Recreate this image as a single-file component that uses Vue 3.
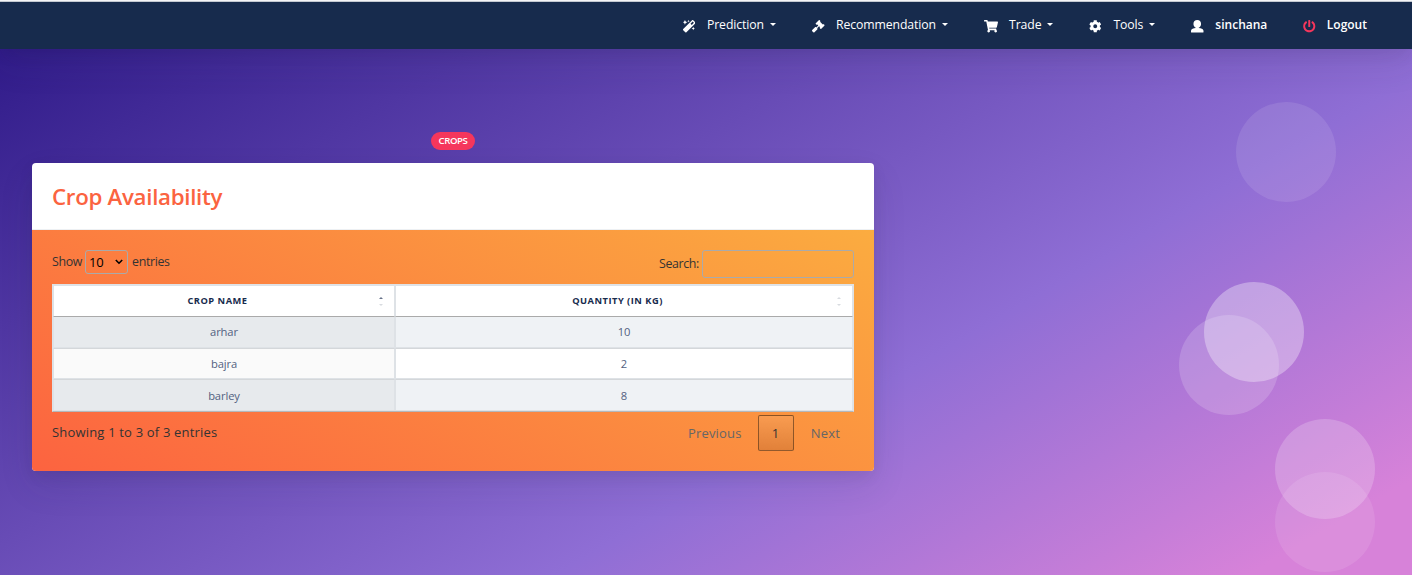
<script setup>
const menus = [
  { label: 'Prediction', icon: 'magic', caret: true },
  { label: 'Recommendation', icon: 'gavel', caret: true },
  { label: 'Trade', icon: 'cart', caret: true },
  { label: 'Tools', icon: 'cog', caret: true },
  { label: 'sinchana', icon: 'user', strong: true },
  { label: 'Logout', icon: 'power', strong: true },
]

const icons = {
  magic: { w: 512, d: 'M224 96l16-32 32-16-32-16-16-32-16 32-32 16 32 16 16 32zM80 190l30-70L180 90l-70-30L80 0 50 60 0 90l50 30zM420 280l-22 44L350 350l48 22L420 420l22-48L490 350l-48-26zM502.620 94.230L417.770 9.380C411.530 3.120 403.340 0 395.150 0c-8.190 0-16.380 3.120-22.630 9.380L9.380 372.520c-12.500 12.500-12.500 32.760 0 45.250l84.850 84.850c6.250 6.250 14.440 9.370 22.620 9.370 8.190 0 16.380-3.120 22.630-9.370l363.140-363.150c12.500-12.480 12.500-32.750 0-45.240zM359.450 203.460l-50.910-50.910 86.600-86.600 50.910 50.910-86.600 86.600z' },
  gavel: { w: 512, d: 'M504.971 199.362l-22.627-22.627c-9.373-9.373-24.569-9.373-33.941 0l-5.657 5.657L329.608 69.255l5.657-5.657c9.373-9.373 9.373-24.569 0-33.941L312.638 7.029c-9.373-9.373-24.569-9.373-33.941 0L154.246 131.480c-9.373 9.373-9.373 24.569 0 33.941l22.627 22.627c9.373 9.373 24.569 9.373 33.941 0l5.657-5.657 39.598 39.598-81.040 81.040-5.657-5.657c-12.497-12.497-32.758-12.497-45.255 0L9.373 412.118c-12.497 12.497-12.497 32.758 0 45.255l45.255 45.255c12.497 12.497 32.758 12.497 45.255 0l114.745-114.745c12.497-12.497 12.497-32.758 0-45.255l-5.657-5.657 81.040-81.040 39.598 39.598-5.657 5.657c-9.373 9.373-9.373 24.569 0 33.941l22.627 22.627c9.373 9.373 24.569 9.373 33.941 0l124.451-124.451c9.372-9.372 9.372-24.568 0-33.941z' },
  cart: { w: 576, d: 'M528.120 301.319l47.273-208C578.806 78.301 567.391 64 551.990 64H159.208l-9.166-44.810C147.758 8.021 137.930 0 126.529 0H24C10.745 0 0 10.745 0 24v16c0 13.255 10.745 24 24 24h69.883l70.248 343.435C147.325 417.100 136 435.222 136 456c0 30.928 25.072 56 56 56s56-25.072 56-56c0-15.674-6.447-29.835-16.824-40h209.647C430.447 426.165 424 440.326 424 456c0 30.928 25.072 56 56 56s56-25.072 56-56c0-22.172-12.888-41.332-31.579-50.405l5.517-24.276c3.413-15.018-8.002-29.319-23.403-29.319H218.117l-6.545-32h293.145c11.206 0 20.920-7.754 23.403-18.681z' },
  cog: { w: 512, d: 'M487.400 315.700l-42.600-24.600c4.300-23.200 4.300-47 0-70.200l42.600-24.600c4.900-2.800 7.100-8.600 5.500-14-11.100-35.600-30-67.800-54.700-94.600-3.800-4.100-10-5.100-14.800-2.300L380.800 110c-17.900-15.400-38.500-27.300-60.800-35.100V25.800c0-5.600-3.900-10.500-9.400-11.700-36.700-8.200-74.300-7.800-109.200 0-5.500 1.200-9.400 6.100-9.400 11.700V75c-22.200 7.900-42.800 19.800-60.800 35.100L88.700 85.500c-4.900-2.800-11-1.900-14.800 2.300-24.700 26.700-43.600 58.900-54.700 94.600-1.700 5.400.6 11.200 5.500 14L67.300 221c-4.300 23.200-4.300 47 0 70.200l-42.600 24.600c-4.900 2.800-7.100 8.600-5.500 14 11.100 35.600 30 67.800 54.700 94.600 3.800 4.100 10 5.100 14.800 2.300l42.600-24.600c17.900 15.400 38.500 27.300 60.800 35.100v49.200c0 5.600 3.900 10.500 9.400 11.700 36.700 8.200 74.300 7.800 109.200 0 5.500-1.200 9.400-6.100 9.400-11.700v-49.200c22.200-7.900 42.800-19.800 60.800-35.100l42.600 24.600c4.900 2.800 11 1.900 14.800-2.300 24.700-26.700 43.600-58.900 54.700-94.600 1.500-5.500-.7-11.300-5.600-14.100zM256 336c-44.100 0-80-35.900-80-80s35.900-80 80-80 80 35.900 80 80-35.900 80-80 80z' },
  user: { w: 512, d: 'M256 0C160 0 100 64 100 160c0 74 40 130 96 156v14C100 340 8 360 0 436v52c0 14 10 24 24 24h464c14 0 24-10 24-24v-52c-8-76-100-96-196-106v-14c56-26 96-82 96-156C412 64 352 0 256 0z' },
  power: { w: 512, d: 'M400 54.100c63 45 104 118.600 104 201.900 0 136.800-110.800 247.700-247.500 248C120 504.300 8.200 393 8 256.400 7.900 173.100 48.900 99.300 111.800 54.200c11.700-8.300 28-4.800 35 7.700L162.600 90c5.900 10.500 3.100 23.800-6.600 31-41.500 30.800-68 79.600-68 134.900-.1 92.300 74.500 168.100 168 168.100 91.600 0 168.600-74.200 168-169.100-.3-51.800-24.700-101.800-68.100-134-9.700-7.200-12.400-20.500-6.500-30.900l15.800-28.100c7-12.400 23.200-16.100 34.800-7.800zM296 264V24c0-13.300-10.700-24-24-24h-32c-13.300 0-24 10.700-24 24v240c0 13.300 10.700 24 24 24h32c13.300 0 24-10.700 24-24z' },
}

const rows = [
  { name: 'arhar', qty: 10 },
  { name: 'bajra', qty: 2 },
  { name: 'barley', qty: 8 },
]
</script>

<template>
  <div class="page">
    <div class="shapes">
      <span v-for="n in 5" :key="n" :class="['bubble', 'b' + n]"></span>
    </div>
    <nav class="navbar">
      <a v-for="m in menus" :key="m.label" :class="['item', m.icon, { strong: m.strong }]">
        <svg class="icon" :viewBox="`0 0 ${icons[m.icon].w} 512`"><path :d="icons[m.icon].d" /></svg>
        <span class="label">{{ m.label }}</span>
        <span v-if="m.caret" class="caret"></span>
      </a>
    </nav>
    <main class="content">
      <div class="badge-row"><span class="badge">CROPS</span></div>
      <section class="card">
        <header class="card-head"><h3>Crop Availability</h3></header>
        <div class="card-body">
          <div class="controls">
            <label class="length">Show
              <span class="select">10
                <svg viewBox="0 0 8 6"><path d="M0.800 1l3.200 3.200L7.200 1" /></svg>
              </span>
              entries</label>
            <label class="search">Search:<input type="text" /></label>
          </div>
          <div class="table">
            <div class="tr head">
              <div class="td">CROP NAME<i class="sort up on"></i><i class="sort down"></i></div>
              <div class="td">QUANTITY (IN KG)<i class="sort up"></i><i class="sort down"></i></div>
            </div>
            <div v-for="r in rows" :key="r.name" class="tr">
              <div class="td">{{ r.name }}</div>
              <div class="td">{{ r.qty }}</div>
            </div>
          </div>
          <div class="footer">
            <span class="info">Showing 1 to 3 of 3 entries</span>
            <div class="pager">
              <a class="muted">Previous</a>
              <a class="current">1</a>
              <a class="muted next">Next</a>
            </div>
          </div>
        </div>
      </section>
    </main>
  </div>
</template>

<style>
html, body { margin: 0; overflow: hidden; }
</style>

<style scoped>
.page {
  position: relative;
  box-sizing: border-box;
  width: 1412px;
  height: 575px;
  overflow: hidden;
  font-family: "Open Sans", sans-serif;
  background: linear-gradient(150deg, #281483 -20px, #8f6ed5 775px, #d782d9 1122px);
}
.shapes { position: absolute; inset: 0; }
.bubble { position: absolute; width: 100px; height: 100px; border-radius: 50%; }
.b1 { left: 1236px; top: 102px; background: rgba(255, 255, 255, 0.1); }
.b2 { left: 1179px; top: 315px; background: rgba(255, 255, 255, 0.17); }
.b3 { left: 1204px; top: 282px; background: rgba(255, 255, 255, 0.33); }
.b4 { left: 1275px; top: 419px; background: rgba(255, 255, 255, 0.2); }
.b5 { left: 1275px; top: 472px; background: rgba(255, 255, 255, 0.1); }

.navbar {
  position: relative;
  box-sizing: border-box;
  height: 49px;
  border-top: 1px solid #f4f5f7;
  background: #172b4d;
  box-shadow: inset 0 1px 0 #c3c9d1, 0 15px 35px rgba(50, 50, 93, 0.1), 0 5px 15px rgba(0, 0, 0, 0.07);
  display: flex;
  justify-content: flex-end;
  padding-right: 45px;
  color: #fff;
}
.item { display: flex; align-items: center; height: 46px; font-size: 12.250px; letter-spacing: -0.1px; margin-left: 36px; }
.item.strong { font-weight: 600; font-size: 12px; letter-spacing: 0; }
.label { padding-top: 1px; }
.icon { height: 12.500px; width: 12.500px; fill: #fff; margin: 5px 11.500px 0 0; }
.cart .icon { width: 14px; margin-right: 11px; }
.power .icon { fill: #f5365c; margin-right: 11px; }
.caret { border: 3.500px solid transparent; border-top-color: #fff; border-bottom: 0; margin: 0 0 0 6px; }

.content { position: relative; margin-left: 32px; width: 842px; padding-top: 83px; }
.badge-row { height: 31px; display: flex; justify-content: center; align-items: flex-start; }
.badge {
  box-sizing: border-box;
  height: 18px;
  width: 44px;
  border-radius: 9px;
  background: #f5365c;
  color: #fff;
  text-align: center;
  font-size: 9.600px;
  font-weight: 600;
  letter-spacing: -0.4px;
  line-height: 18px;
}
.card {
  height: 308px;
  border-radius: 4px;
  overflow: hidden;
  background: #fff;
  box-shadow: 0 15px 35px rgba(50, 50, 93, 0.1), 0 5px 15px rgba(0, 0, 0, 0.07);
}
.card-head { box-sizing: border-box; height: 67px; border-bottom: 1px solid #edf0f3; padding: 0 20px; }
h3 { margin: 0; font-size: 22.300px; line-height: 68px; font-weight: 600; letter-spacing: -0.3px; color: #fb6340; }
.card-body {
  box-sizing: border-box;
  height: 241px;
  padding: 20px 20px 0;
  background: linear-gradient(29deg, #fc6340, #fbac40);
}
.controls { display: flex; justify-content: space-between; height: 34px; font-size: 12.400px; color: #333; letter-spacing: -0.35px; }
.length { display: flex; height: 24px; line-height: 22px; align-items: center; }
.select {
  box-sizing: border-box;
  display: inline-flex;
  justify-content: space-between;
  align-items: center;
  width: 43px;
  height: 24px;
  border: 1px solid #aaa;
  border-radius: 3px;
  margin: 0 4px 0 3px;
  padding: 0 4px 0 3px;
  color: #000;
  font-size: 13px;
}
.select svg { width: 8px; height: 6px; fill: none; stroke: #000; stroke-width: 1.600; }
.search { display: flex; height: 28px; line-height: 26px; align-items: center; }
.search input {
  box-sizing: border-box;
  width: 152px;
  height: 28px;
  border: 1px solid #aaa;
  border-radius: 3px;
  background: transparent;
  margin: 0 0 0 3px;
}
.table { display: grid; border: 1px solid #dee2e6; border-bottom-color: #b5b7ba; }
.tr { display: grid; grid-template-columns: 342px 458px; height: 31px; font-size: 11.200px; letter-spacing: -0.1px; color: #525f7f; }
.td {
  position: relative;
  box-sizing: border-box;
  display: flex;
  align-items: center;
  justify-content: center;
  border: 1px solid #dee2e6;
  border-top-color: #d4d7da;
  padding-bottom: 1px;
  background: #fff;
}
.tr:nth-child(even) .td:first-child { background: #e7eaed; }
.tr:nth-child(even) .td:last-child { background: #eff2f5; }
.tr:nth-child(3) .td:first-child { background: #fafafa; }
.tr:nth-child(2) .td { border-top: 0; }
.tr:nth-child(4) { height: 32px; }
.tr:nth-child(4) .td { padding: 1px 0 0; }
.tr.head { height: 32px; font-size: 9.300px; font-weight: 700; letter-spacing: 0.5px; color: #172b4d; }
.tr.head .td { border-top-color: #dee2e6; border-bottom-color: #aaa; padding-right: 13px; padding-bottom: 2px; }
.sort { position: absolute; right: 11px; border: 2px solid transparent; }
.sort.up { top: 11px; border-bottom: 2.500px solid #d8dbe0; border-top: 0; }
.sort.up.on { border-bottom-color: #66728a; }
.sort.down { top: 18px; border-top: 2.500px solid #d8dbe0; border-bottom: 0; }
.footer { display: flex; justify-content: space-between; padding-top: 3px; color: #333; font-size: 13px; }
.info { line-height: 34px; letter-spacing: 0.18px; }
.pager { display: flex; align-items: center; height: 36px; letter-spacing: 0.2px; }
.pager .muted { color: #666; }
.current {
  box-sizing: border-box;
  width: 36px;
  height: 36px;
  margin: 0 17px 0 16px;
  border: 1px solid rgba(90, 55, 25, 0.65);
  border-radius: 2px;
  background: linear-gradient(to bottom, rgba(230, 230, 230, 0.1), rgba(0, 0, 0, 0.1));
  text-align: center;
  line-height: 34px;
}
.next { margin-right: 14px; }
</style>
